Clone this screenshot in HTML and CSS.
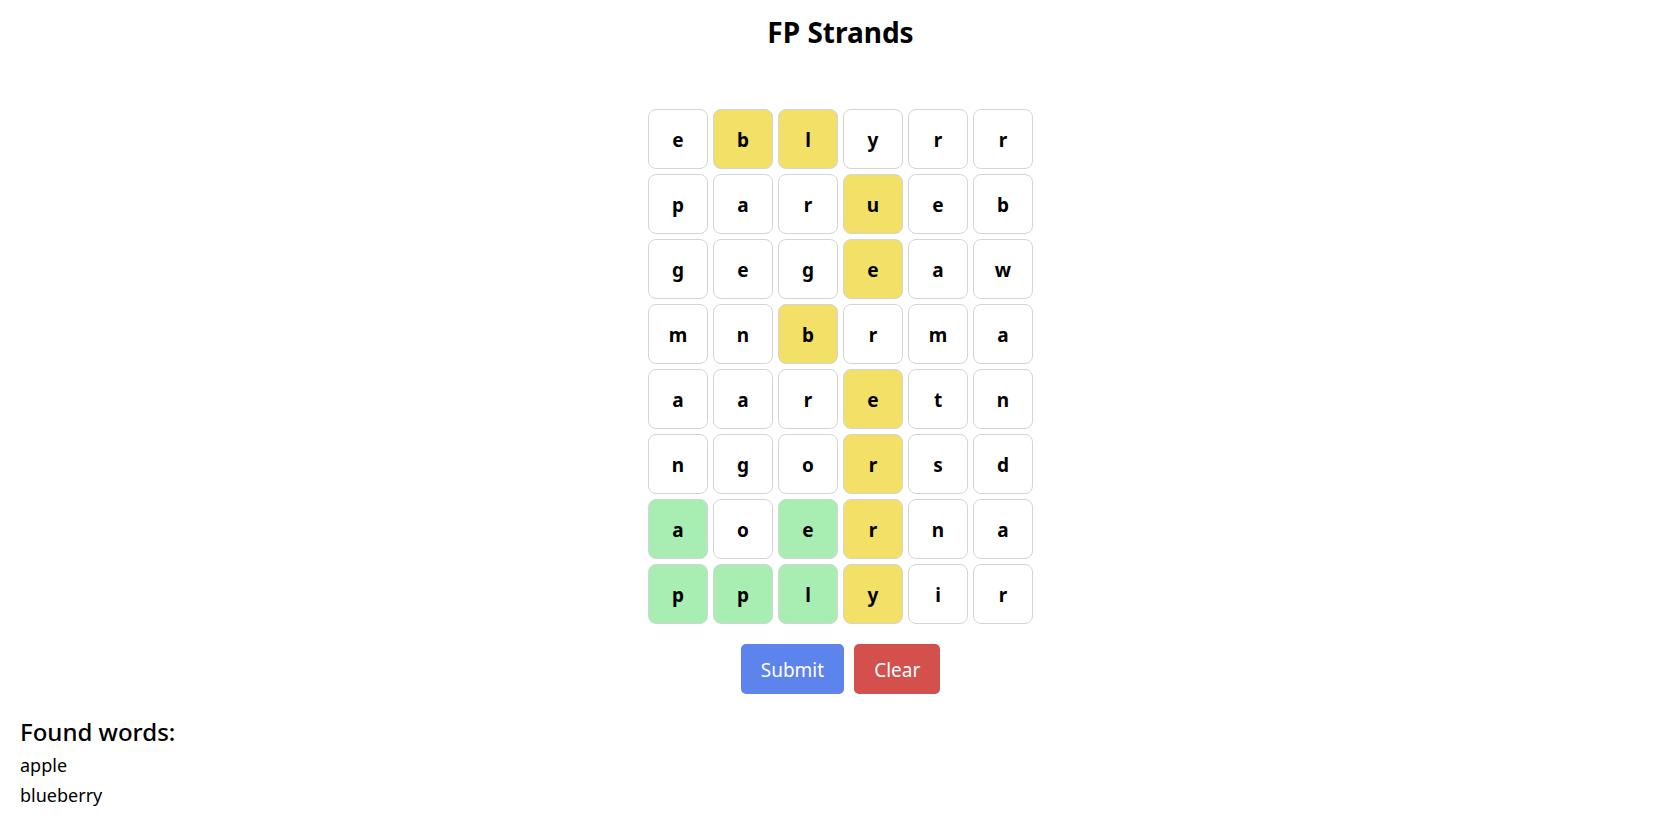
FILE: index.html
```html
<!DOCTYPE html>
<html lang="en">
<head>
<meta charset="utf-8">
<title>FP Strands</title>
<link rel="stylesheet" href="styles.css">
</head>
<body>
<main class="game">
<h1 class="title">FP Strands</h1>
<div class="board" id="board"></div>
<div class="actions">
<button class="button submit" type="button">Submit</button>
<button class="button clear" type="button">Clear</button>
</div>
</main>
<section class="found">
<h2 class="found-title">Found words:</h2>
<ul class="found-list"><li>apple</li><li>blueberry</li></ul>
</section>
<script src="script.js"></script>
</body>
</html>
```
FILE: styles.css
```css
* { box-sizing: border-box; }
body {
  margin: 0;
  background: #fff;
  color: #000;
  font-family: "Segoe UI", "Noto Sans", sans-serif;
  font-size: 19px;
  line-height: 30px;
}
h1, h2, ul { margin: 0; padding: 0; }
.game {
  display: flex;
  flex-direction: column;
  align-items: center;
  padding: 15px 0 0 2px;
}
.title { font-size: 28px; line-height: 35px; font-weight: 700; }
.board {
  display: grid;
  grid-template-columns: repeat(6, 60px);
  grid-auto-rows: 60px;
  gap: 5px;
  margin-top: 59px;
}
.tile {
  padding: 2px 0 0;
  border: 1px solid #d1d5db;
  border-radius: 8px;
  background: #fff;
  color: #000;
  font: inherit;
  font-weight: 700;
}
.selected { background: #f2e067; }
.solved { background: #a8edb2; }
.actions { display: flex; gap: 10px; margin-top: 20px; }
.button {
  padding: 11px 20px 9px;
  border: 0;
  border-radius: 5px;
  color: #fff;
  font: inherit;
}
.submit { background: #5d83ed; }
.clear { background: #d3504c; }
.found { padding: 20px; }
.found-title { font-size: 24px; line-height: 36px; font-weight: 500; }
.found-list { list-style: none; font-size: 18px; }
```
FILE: script.js
```js
const rows = ["eblyrr", "parueb", "gegeaw", "mnbrma", "aaretn", "ngorsd", "aoerna", "pplyir"];
const selected = new Set(["0-1", "0-2", "1-3", "2-3", "3-2", "4-3", "5-3", "6-3", "7-3"]);
const solved = new Set(["6-0", "6-2", "7-0", "7-1", "7-2"]);
const board = document.getElementById("board");
rows.forEach((row, y) => {
  [...row].forEach((letter, x) => {
    const tile = document.createElement("button");
    const key = `${y}-${x}`;
    tile.type = "button";
    tile.className = "tile";
    if (selected.has(key)) tile.classList.add("selected");
    if (solved.has(key)) tile.classList.add("solved");
    tile.textContent = letter;
    board.append(tile);
  });
});
```
